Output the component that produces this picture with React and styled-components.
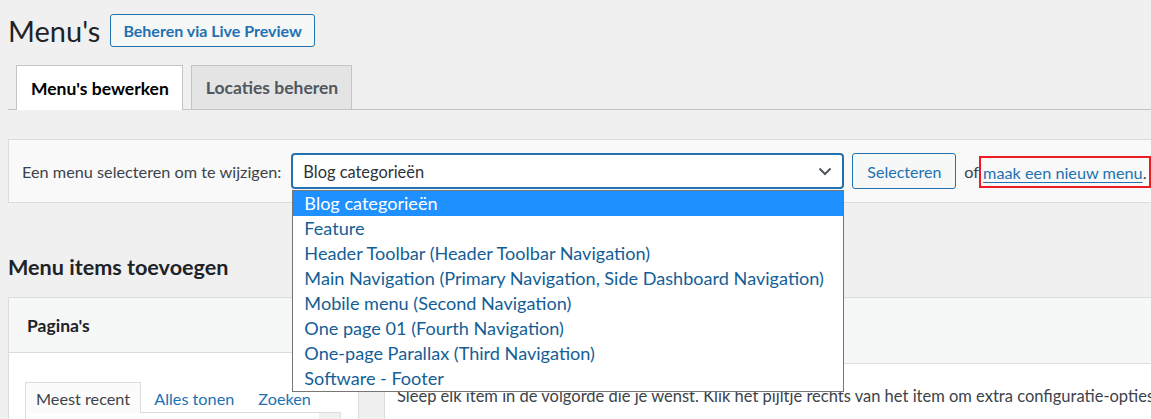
import React from "react";
import styled, { createGlobalStyle } from "styled-components";

const GlobalStyle = createGlobalStyle`
  html, body { margin: 0; padding: 0; }
  body {
    background: #f0f0f1;
    font-family: Lato, "Open Sans", sans-serif;
    color: #3c434a;
    overflow: hidden;
  }
  * { box-sizing: border-box; }
`;

const Page = styled.div`
  width: 1200px;
  padding-left: 8px;
`;

const HeaderRow = styled.div`
  display: flex;
  align-items: center;
  gap: 10px;
  padding-top: 12px;
`;

const Title = styled.h1`
  margin: 0;
  font-size: 29px;
  font-weight: 400;
  line-height: 37px;
  color: #1d2327;
`;

const OutlineButton = styled.button`
  font-family: inherit;
  font-size: 16px;
  font-weight: ${(p) => (p.$bold ? 700 : 400)};
  color: #2271b1;
  background: #f6f7f7;
  border: 1px solid #2271b1;
  border-radius: 3px;
  height: ${(p) => p.$h || 33}px;
  padding: 0 ${(p) => p.$px || 12}px;
  margin-left: ${(p) => p.$ml || 0}px;
  cursor: pointer;
  white-space: nowrap;
`;

const TabBar = styled.div`
  display: flex;
  gap: 8px;
  margin-top: 16px;
  padding-left: 8px;
  border-bottom: 1px solid #c3c4c7;
  height: 45px;
`;

const Tab = styled.div`
  padding: 0 13px 0 14px;
  display: flex;
  align-items: center;
  font-size: 17.5px;
  font-weight: 700;
  border: 1px solid #c3c4c7;
  border-bottom: none;
  background: ${(p) => (p.$active ? "#fff" : "#e4e4e5")};
  color: ${(p) => (p.$active ? "#000" : "#50575e")};
  margin-bottom: ${(p) => (p.$active ? "-1px" : "0")};
  height: ${(p) => (p.$active ? "45px" : "44px")};
`;

const ManageBox = styled.div`
  position: relative;
  margin-top: 29px;
  height: 64px;
  background: #f9f9f9;
  border: 1px solid #dcdcde;
  display: flex;
  align-items: center;
  padding-left: 13px;
  font-size: 16.25px;
  white-space: nowrap;
`;

const Label = styled.span`
  color: #3c434a;
  margin-right: 10px;
`;

const SelectWrap = styled.div`
  position: relative;
  width: 553px;
  height: 36px;
  flex-shrink: 0;
`;

const SelectBox = styled.div`
  height: 36px;
  border: 2px solid #2271b1;
  border-radius: 4px;
  background: #fff;
  display: flex;
  align-items: center;
  justify-content: space-between;
  padding: 0 10px 0 10px;
  font-size: 16.4px;
  color: #2c3338;
`;

const Dropdown = styled.div`
  position: absolute;
  top: 37px;
  left: 1px;
  width: 552px;
  background: #fff;
  border: 1px solid #767676;
  z-index: 10;
`;

const Option = styled.div`
  height: 25px;
  line-height: 25px;
  padding-left: 11px;
  font-size: 18.1px;
  background: ${(p) => (p.$sel ? "#1e90ff" : "#fff")};
  color: ${(p) => (p.$sel ? "#fff" : "#135e96")};
`;

const Or = styled.span`
  margin-left: 8px;
  color: #3c434a;
`;

const Highlight = styled.span`
  display: inline-flex;
  align-items: center;
  height: 32px;
  border: 2px solid #ed1c24;
  padding: 0 2px 0 2px;
  margin-left: 0px;
  margin-top: 2px;
`;

const Link = styled.a`
  color: #2271b1;
  text-decoration: underline;
  text-underline-offset: 3px;
`;

const SectionTitle = styled.h2`
  margin: 50px 0 0 0;
  font-size: 21.6px;
  font-weight: 700;
  line-height: 28px;
  color: #1d2327;
`;

const Columns = styled.div`
  display: flex;
  gap: 25px;
  margin-top: 16px;
  align-items: flex-start;
`;

const LeftPanel = styled.div`
  width: 351px;
  flex-shrink: 0;
  height: 140px;
  border: 1px solid #dcdcde;
  background: #fff;
`;

const PanelHead = styled.div`
  height: ${(p) => p.$h}px;
  background: #f6f7f7;
  border-bottom: 1px solid #dcdcde;
  display: flex;
  align-items: center;
  padding-left: 18px;
  font-size: 17.5px;
  font-weight: 700;
  color: #1d2327;
`;

const PanelBody = styled.div`
  padding: 29px 17px 0 16px;
`;

const MiniTabs = styled.div`
  display: flex;
  align-items: flex-end;
  font-size: 16.25px;
  white-space: nowrap;
`;

const MiniTab = styled.div`
  height: 31px;
  display: flex;
  align-items: center;
  padding: ${(p) => (p.$active ? "0 10px" : "0 0 0 12px")};
  color: ${(p) => (p.$active ? "#3c434a" : "#2271b1")};
  background: ${(p) => (p.$active ? "#fbfbfb" : "transparent")};
  border: 1px solid ${(p) => (p.$active ? "#dcdcde" : "transparent")};
  border-bottom: none;
  margin-right: ${(p) => (p.$active ? "0" : "10px")};
`;

const TabsPanel = styled.div`
  display: flex;
  height: 30px;
  border: 1px solid #dcdcde;
  margin-top: -1px;
  background: #fff;
`;

const PanelFill = styled.div`
  flex: 1;
`;

const ScrollStrip = styled.div`
  width: 21px;
  background: #f0f0f0;
`;

const RightPanel = styled.div`
  flex: 1;
  min-width: 0;
  height: 140px;
  border: 1px solid #dcdcde;
  border-right: none;
  background: #fff;
  overflow: hidden;
`;

const RightText = styled.div`
  padding: 22px 0 0 12px;
  font-size: 16.5px;
  color: #3c434a;
  white-space: nowrap;
`;

const options = [
  "Blog categorieën",
  "Feature",
  "Header Toolbar (Header Toolbar Navigation)",
  "Main Navigation (Primary Navigation, Side Dashboard Navigation)",
  "Mobile menu (Second Navigation)",
  "One page 01 (Fourth Navigation)",
  "One-page Parallax (Third Navigation)",
  "Software - Footer",
];

export default function App() {
  return (
    <>
      <GlobalStyle />
      <Page>
        <HeaderRow>
          <Title>Menu's</Title>
          <OutlineButton $bold $px={12}>Beheren via Live Preview</OutlineButton>
        </HeaderRow>
        <TabBar>
          <Tab $active>Menu's bewerken</Tab>
          <Tab>Locaties beheren</Tab>
        </TabBar>
        <ManageBox>
          <Label>Een menu selecteren om te wijzigen:</Label>
          <SelectWrap>
            <SelectBox>
              <span>Blog categorieën</span>
              <svg width="14" height="9" viewBox="0 0 14 9">
                <polyline points="1.5,1.5 7,7 12.5,1.5" fill="none" stroke="#50575e" strokeWidth="2" />
              </svg>
            </SelectBox>
            <Dropdown>
              {options.map((o, i) => (
                <Option key={o} $sel={i === 0}>{o}</Option>
              ))}
            </Dropdown>
          </SelectWrap>
          <OutlineButton $h={36} $px={14} $ml={8}>Selecteren</OutlineButton>
          <Or>of</Or>
          <Highlight>
            <Link href="#">maak een nieuw menu</Link>.
          </Highlight>
        </ManageBox>
        <SectionTitle>Menu items toevoegen</SectionTitle>
        <Columns>
          <LeftPanel>
            <PanelHead $h={55}>Pagina's</PanelHead>
            <PanelBody>
              <MiniTabs>
                <MiniTab $active>Meest recent</MiniTab>
                <MiniTab>Alles tonen</MiniTab>
                <MiniTab>Zoeken</MiniTab>
              </MiniTabs>
              <TabsPanel>
                <PanelFill />
                <ScrollStrip />
              </TabsPanel>
            </PanelBody>
          </LeftPanel>
          <RightPanel>
            <PanelHead $h={66} />
            <RightText>
              Sleep elk item in de volgorde die je wenst. Klik het pijltje rechts van het item om extra configuratie-opties weer te geven.
            </RightText>
          </RightPanel>
        </Columns>
      </Page>
    </>
  );
}
